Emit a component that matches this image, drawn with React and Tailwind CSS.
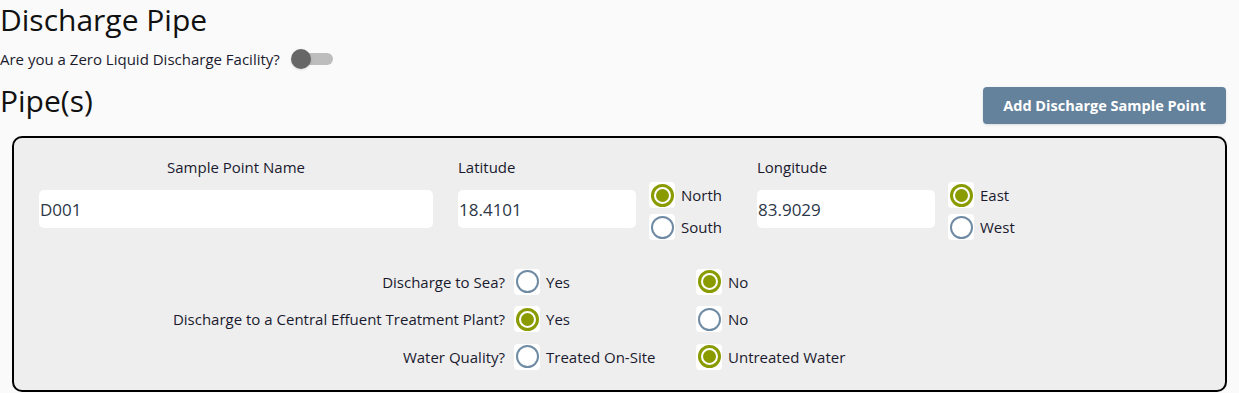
import React, { useState } from "react";

function Radio({ checked, label, onClick }) {
  return (
    <label className="flex items-center gap-[6px] cursor-pointer" onClick={onClick}>
      <span className="flex h-[26px] w-[26px] items-center justify-center rounded-[4px] bg-white">
        {checked ? (
          <span className="flex h-[23px] w-[23px] items-center justify-center rounded-full border-[3px] border-[#8a9b00] bg-white">
            <span className="h-[13px] w-[13px] rounded-full bg-[#8a9b00]" />
          </span>
        ) : (
          <span className="h-[23px] w-[23px] rounded-full border-2 border-[#6f8ba4] bg-white" />
        )}
      </span>
      <span className="text-[15px] text-[#1a1a2e]">{label}</span>
    </label>
  );
}

function Field({ label, value, width, center }) {
  return (
    <div className="flex flex-col" style={{ width }}>
      <div className={`h-[21px] text-[15px] leading-[21px] text-[#1a1a2e] ${center ? "text-center" : ""}`}>
        {label}
      </div>
      <input
        className="mt-[12px] h-[38px] w-full rounded-[5px] bg-white px-[1px] text-[17px] text-[#2d3748] outline-none"
        defaultValue={value}
      />
    </div>
  );
}

function QuestionRow({ question, options, value, onChange }) {
  return (
    <div className="flex h-[37.5px] items-center">
      <div className="w-[500px] pr-[9px] text-right text-[15px] text-[#1a1a2e]">{question}</div>
      <div className="w-[182px]">
        <Radio checked={value === 0} label={options[0]} onClick={() => onChange(0)} />
      </div>
      <div>
        <Radio checked={value === 1} label={options[1]} onClick={() => onChange(1)} />
      </div>
    </div>
  );
}

export default function App() {
  const [lat, setLat] = useState("N");
  const [lon, setLon] = useState("E");
  const [sea, setSea] = useState(1);
  const [cetp, setCetp] = useState(0);
  const [quality, setQuality] = useState(1);

  return (
    <div className="min-h-[393px] bg-[#fafafa] font-['Open_Sans',sans-serif] text-[#111]">
      <h1 className="h-[40px] text-[30px] leading-[40px]">Discharge Pipe</h1>

      <div className="flex h-[38px] items-center gap-[11px]">
        <span className="text-[15px] text-[#1a1a2e]">Are you a Zero Liquid Discharge Facility?</span>
        <span className="relative h-[20px] w-[42px]">
          <span className="absolute left-[9px] top-[4px] h-[12px] w-[33px] rounded-full bg-[#bdbdbd]" />
          <span className="absolute left-0 top-0 h-[20px] w-[20px] rounded-full bg-[#666] shadow" />
        </span>
      </div>

      <div className="flex items-start justify-between pr-[13px]">
        <h2 className="mt-[1px] text-[30px] leading-[44px]">Pipe(s)</h2>
        <button className="mt-[9px] h-[37px] w-[243px] rounded-[4px] bg-[#64829c] text-[14.5px] font-bold text-white shadow">
          Add Discharge Sample Point
        </button>
      </div>

      <div className="mx-[12px] mt-[12px] h-[256px] rounded-[10px] border-2 border-black bg-[#eeeeee] pl-[25px] pt-[19px]">
        <div className="flex">
          <Field label="Sample Point Name" value="D001" width="394px" center />
          <div className="ml-[25px] flex">
            <Field label="Latitude" value="18.4101" width="178px" />
            <div className="ml-[13px] mt-[25px] flex flex-col gap-[6px]">
              <Radio checked={lat === "N"} label="North" onClick={() => setLat("N")} />
              <Radio checked={lat === "S"} label="South" onClick={() => setLat("S")} />
            </div>
          </div>
          <div className="ml-[35px] flex">
            <Field label="Longitude" value="83.9029" width="178px" />
            <div className="ml-[13px] mt-[25px] flex flex-col gap-[6px]">
              <Radio checked={lon === "E"} label="East" onClick={() => setLon("E")} />
              <Radio checked={lon === "W"} label="West" onClick={() => setLon("W")} />
            </div>
          </div>
        </div>

        <div className="ml-[-25px] mt-[23px] flex flex-col">
          <QuestionRow question="Discharge to Sea?" options={["Yes", "No"]} value={sea} onChange={setSea} />
          <QuestionRow
            question="Discharge to a Central Effuent Treatment Plant?"
            options={["Yes", "No"]}
            value={cetp}
            onChange={setCetp}
          />
          <QuestionRow
            question="Water Quality?"
            options={["Treated On-Site", "Untreated Water"]}
            value={quality}
            onChange={setQuality}
          />
        </div>
      </div>
    </div>
  );
}
